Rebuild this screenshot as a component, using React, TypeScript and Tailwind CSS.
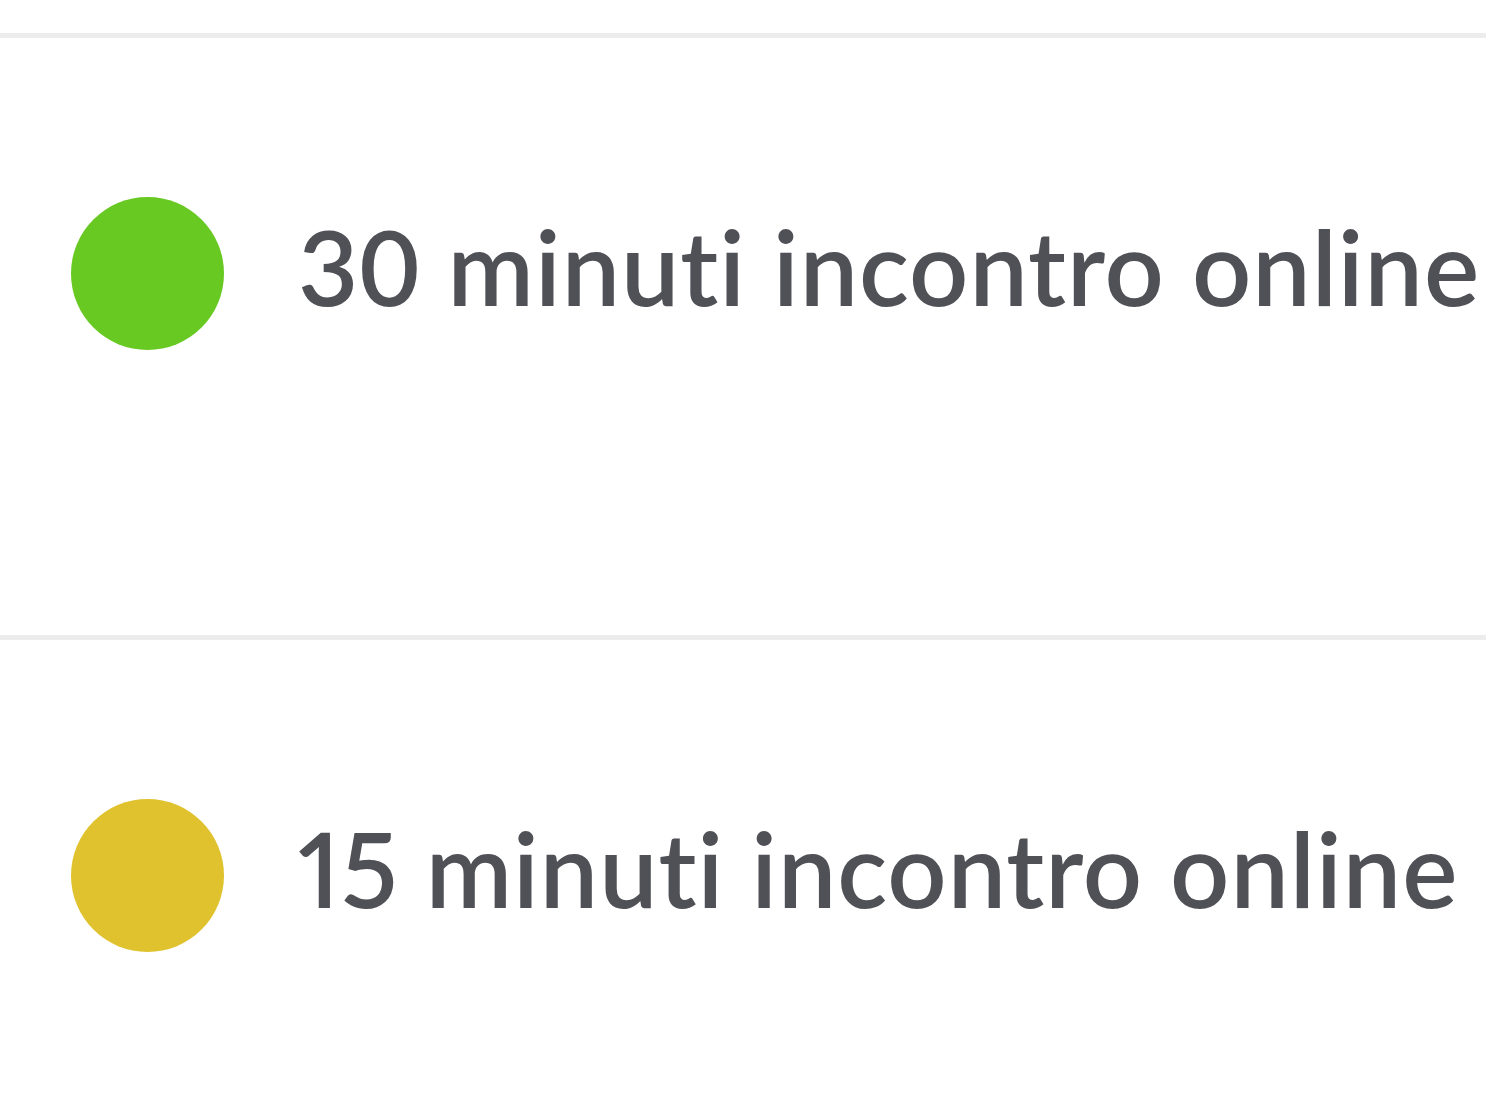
const options = [
  { id: "30", label: "30 minuti incontro online", color: "bg-[#68c923]", nums: "tabular-nums" },
  { id: "15", label: "15 minuti incontro online", color: "bg-[#dfc22d]", nums: "proportional-nums" },
];

export default function App() {
  return (
    <main className="h-screen w-full overflow-hidden bg-white pt-[33px] font-['Lato',sans-serif]">
      {options.map((option) => (
        <div key={option.id} className="border-t-[5px] border-[#ececec]">
          <div className="flex h-[597px] items-start pl-[71px] pt-[159px]">
            <div className={`size-[153px] shrink-0 rounded-full ${option.color}`} />
            <span
              className={`${option.nums} ml-[74px] mt-[17px] whitespace-nowrap text-[104px] font-semibold leading-[1] tracking-[1px] text-[#505157] [font-variant-ligatures:none]`}
            >
              {option.label}
            </span>
          </div>
        </div>
      ))}
    </main>
  );
}
